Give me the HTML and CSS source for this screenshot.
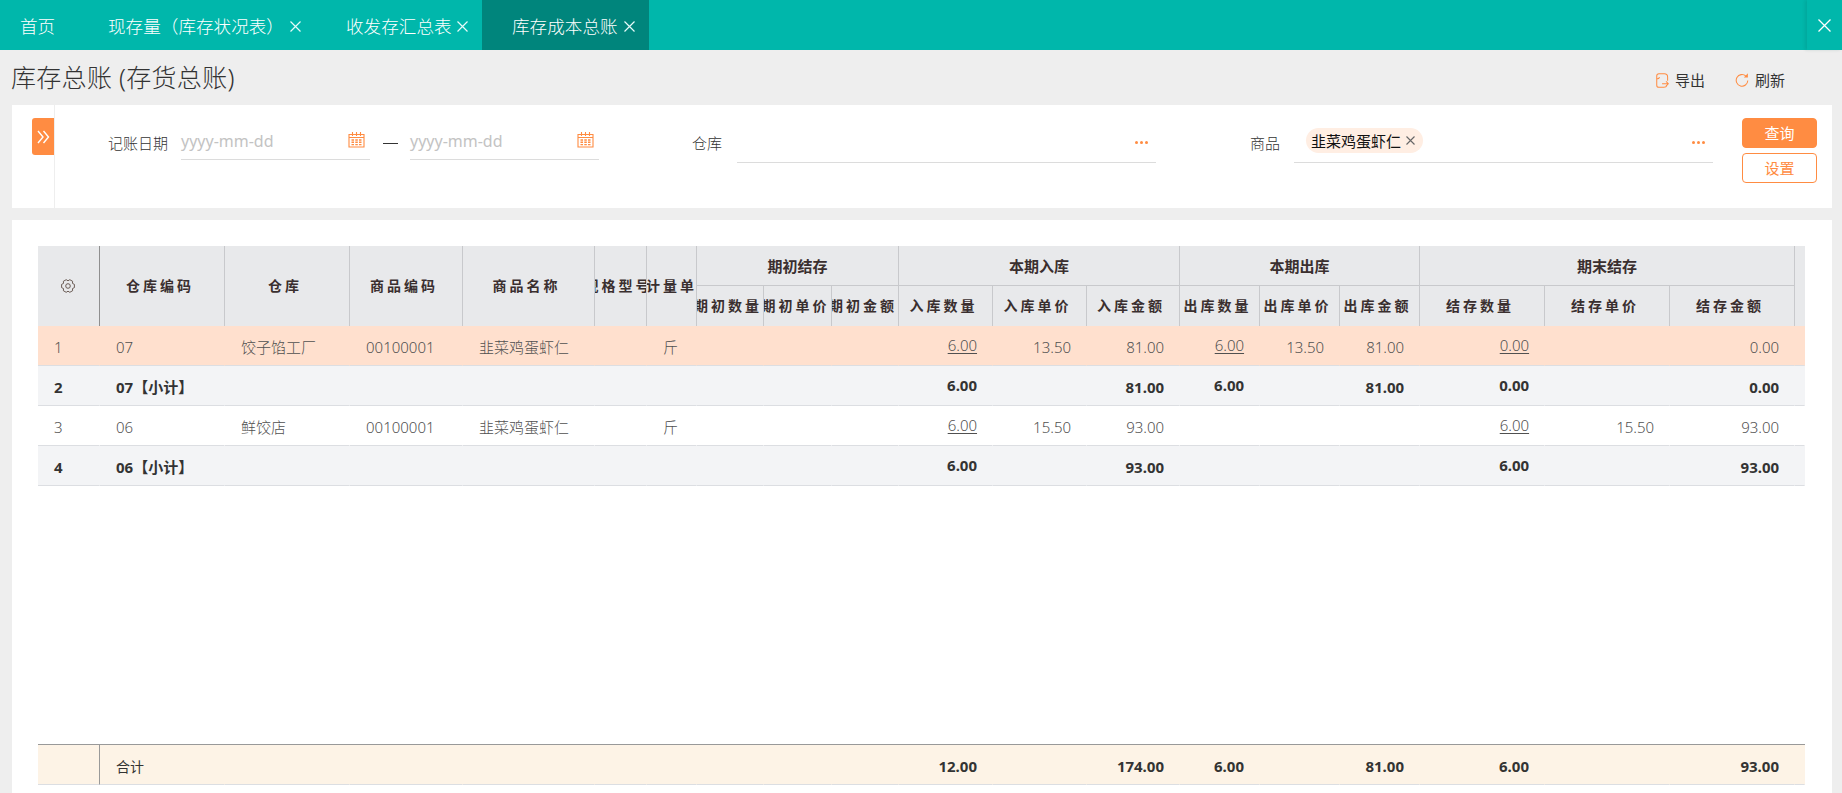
FILE: index.html
```html
<!DOCTYPE html>
<html lang="zh-CN">
<head>
<meta charset="utf-8">
<title>库存总账</title>
<link rel="stylesheet" href="styles.css">
</head>
<body>
<nav class="tabbar">
  <div class="tab tab-home">首页</div>
  <div class="tab tab-a">现存量（库存状况表）<svg class="tab-x" viewBox="0 0 11 11"><path d="M.5.5l10 10M10.500.5l-10 10"/></svg></div>
  <div class="tab tab-b">收发存汇总表<svg class="tab-x" viewBox="0 0 11 11"><path d="M.5.5l10 10M10.500.5l-10 10"/></svg></div>
  <div class="tab tab-c">库存成本总账<svg class="tab-x" viewBox="0 0 11 11"><path d="M.5.5l10 10M10.500.5l-10 10"/></svg></div>
  <div class="tab-fill"></div>
  <div class="tab-close"><svg viewBox="0 0 13 13"><path d="M.5.5l12 12M12.500.5l-12 12"/></svg></div>
</nav>

<header class="titlebar">
  <h1 class="title">库存总账 (存货总账)</h1>
  <div class="tools">
    <span class="tool tool-export"><svg viewBox="0 0 14 16"><path d="M6 .7H3.200C1.800.7.800 1.700.800 3v10c0 1.300 1 2.300 2.400 2.300h5.300c1.500 0 2.700-.6 3-1.800M6 .7h3c2 0 3.500 1.500 3.500 3.500v4M.8 6.300c1.500 0 2.600-.4 3-1.800"/><path d="M6.500 11.500h6.700M10.800 9l2.500 2.500-2.500 2.500"/></svg>导出</span>
    <span class="tool tool-refresh"><svg viewBox="0 0 15 15"><path d="M11.700 3.300A6.200 6.200 0 1 0 13.700 8"/><path class="solid" d="M9.500 4.700h4.300V.4z"/></svg>刷新</span>
  </div>
</header>

<section class="filters">
  <div class="toggle-col"><button class="toggle"><svg viewBox="0 0 13 14"><path d="M1 1l5 6-5 6M6.500 1l5 6-5 6"/></svg></button></div>
  <div class="field field-date">
    <label class="label">记账日期</label>
    <div class="input date"><span class="ph">yyyy-mm-dd</span><svg class="cal" viewBox="0 0 17 17"><path d="M1 3.500h15v12.500H1zM1 6.500h15"/><path d="M4.500 1v4M12.500 1v4M8.500 1v4" /><path class="cal-grid" d="M3.500 9h2.500M7.300 9h2.500M11 9h2.500M3.500 11.300h2.500M7.300 11.300h2.500M11 11.300h2.500M3.500 13.600h2.500M7.300 13.600h2.500M11 13.600h2.500"/></svg></div>
    <span class="dash"></span>
    <div class="input date"><span class="ph">yyyy-mm-dd</span><svg class="cal" viewBox="0 0 17 17"><path d="M1 3.500h15v12.500H1zM1 6.500h15"/><path d="M4.500 1v4M12.500 1v4M8.500 1v4" /><path class="cal-grid" d="M3.500 9h2.500M7.300 9h2.500M11 9h2.500M3.500 11.300h2.500M7.300 11.300h2.500M11 11.300h2.500M3.500 13.600h2.500M7.300 13.600h2.500M11 13.600h2.500"/></svg></div>
  </div>
  <div class="field field-wh">
    <label class="label">仓库</label>
    <div class="input pick"><span class="dots"><i></i><i></i><i></i></span></div>
  </div>
  <div class="field field-goods">
    <label class="label">商品</label>
    <div class="input pick"><span class="tag">韭菜鸡蛋虾仁<svg class="tag-x" viewBox="0 0 9 9"><path d="M.5.5l8 8M8.500.5l-8 8"/></svg></span><span class="dots"><i></i><i></i><i></i></span></div>
  </div>
  <div class="actions">
    <button class="btn btn-primary">查询</button>
    <button class="btn btn-ghost">设置</button>
  </div>
</section>

<main class="panel">
  <div class="grid-wrap">
    <table class="grid">
      <colgroup><col class="w62"><col class="w125"><col class="w125"><col class="w113"><col class="w132"><col class="w52"><col class="w50"><col class="w67"><col class="w68"><col class="w67"><col class="w94"><col class="w94"><col class="w93"><col class="w80"><col class="w80"><col class="w80"><col class="w125"><col class="w125"><col class="w125"><col class="w10"></colgroup>
      <thead>
        <tr class="hd1">
          <th rowspan="2" class="th-gear"><svg class="gear" viewBox="0 0 14 14"><path d="M13.400 5.400V8.600L11.500 9.600 11.600 11.750 8.800 13.300 7 12.200 5.200 13.300 2.400 11.750 2.500 9.600 .6 8.600V5.400L2.500 4.400 2.400 2.250 5.200.7 7 1.800 8.800.7 11.600 2.250 11.500 4.400z"/><circle cx="7" cy="7" r="2.300"/></svg></th>
          <th rowspan="2"><div class="hd">仓库编码</div></th>
          <th rowspan="2"><div class="hd">仓库</div></th>
          <th rowspan="2"><div class="hd">商品编码</div></th>
          <th rowspan="2"><div class="hd">商品名称</div></th>
          <th rowspan="2"><div class="hd">规格型号</div></th>
          <th rowspan="2"><div class="hd hd-unit">计量单</div></th>
          <th colspan="3" class="grp">期初结存</th>
          <th colspan="3" class="grp">本期入库</th>
          <th colspan="3" class="grp">本期出库</th>
          <th colspan="3" class="grp">期末结存</th>
          <th rowspan="2" class="th-gut"></th>
        </tr>
        <tr class="hd2">
          <th><div class="hd">期初数量</div></th><th><div class="hd">期初单价</div></th><th><div class="hd">期初金额</div></th>
          <th><div class="hd">入库数量</div></th><th><div class="hd">入库单价</div></th><th><div class="hd">入库金额</div></th>
          <th><div class="hd">出库数量</div></th><th><div class="hd">出库单价</div></th><th><div class="hd">出库金额</div></th>
          <th><div class="hd">结存数量</div></th><th><div class="hd">结存单价</div></th><th><div class="hd">结存金额</div></th>
        </tr>
      </thead>
      <tbody>
        <tr class="row-sel">
          <td>1</td><td>07</td><td>饺子馅工厂</td><td>00100001</td><td>韭菜鸡蛋虾仁</td><td></td><td>斤</td>
          <td></td><td></td><td></td>
          <td class="num qty"><a class="lnk">6.00</a></td><td class="num">13.50</td><td class="num">81.00</td>
          <td class="num qty"><a class="lnk">6.00</a></td><td class="num">13.50</td><td class="num">81.00</td>
          <td class="num qty"><a class="lnk">0.00</a></td><td class="num"></td><td class="num">0.00</td><td></td>
        </tr>
        <tr class="row-sum">
          <td>2</td><td>07【小计】</td><td></td><td></td><td></td><td></td><td></td>
          <td></td><td></td><td></td>
          <td class="num qty">6.00</td><td class="num"></td><td class="num">81.00</td>
          <td class="num qty">6.00</td><td class="num"></td><td class="num">81.00</td>
          <td class="num qty">0.00</td><td class="num"></td><td class="num">0.00</td><td></td>
        </tr>
        <tr>
          <td>3</td><td>06</td><td>鲜饺店</td><td>00100001</td><td>韭菜鸡蛋虾仁</td><td></td><td>斤</td>
          <td></td><td></td><td></td>
          <td class="num qty"><a class="lnk">6.00</a></td><td class="num">15.50</td><td class="num">93.00</td>
          <td class="num"></td><td class="num"></td><td class="num"></td>
          <td class="num qty"><a class="lnk">6.00</a></td><td class="num">15.50</td><td class="num">93.00</td><td></td>
        </tr>
        <tr class="row-sum">
          <td>4</td><td>06【小计】</td><td></td><td></td><td></td><td></td><td></td>
          <td></td><td></td><td></td>
          <td class="num qty">6.00</td><td class="num"></td><td class="num">93.00</td>
          <td class="num"></td><td class="num"></td><td class="num"></td>
          <td class="num qty">6.00</td><td class="num"></td><td class="num">93.00</td><td></td>
        </tr>
      </tbody>
    </table>
  </div>
  <table class="grid grid-foot">
    <colgroup><col class="w62"><col class="w125"><col class="w125"><col class="w113"><col class="w132"><col class="w52"><col class="w50"><col class="w67"><col class="w68"><col class="w67"><col class="w94"><col class="w94"><col class="w93"><col class="w80"><col class="w80"><col class="w80"><col class="w125"><col class="w125"><col class="w125"><col class="w10"></colgroup>
    <tbody>
      <tr>
        <td class="foot-first"></td><td class="foot-label">合计</td><td></td><td></td><td></td><td></td><td></td>
        <td></td><td></td><td></td>
        <td class="num">12.00</td><td class="num"></td><td class="num">174.00</td>
        <td class="num">6.00</td><td class="num"></td><td class="num">81.00</td>
        <td class="num">6.00</td><td class="num"></td><td class="num">93.00</td><td></td>
      </tr>
    </tbody>
  </table>
</main>
</body>
</html>
```

FILE: styles.css
```css
* { box-sizing: border-box; }
html, body { height: 100%; }
body {
  margin: 0;
  height: 793px;
  overflow: hidden;
  display: flex;
  flex-direction: column;
  background: #eeeeee;
  color: #333;
  font-family: "Noto Sans", "Noto Sans CJK SC", "Open Sans", sans-serif;
  font-size: 15px;
}

/* tab bar */
.tabbar { display: flex; height: 50px; flex: none; background: #00b7ab; color: #fff; }
.tab { display: flex; align-items: center; height: 50px; font-size: 17.6px; white-space: nowrap; font-weight: 300; }
.tab-home { width: 88px; padding-left: 20px; }
.tab-a { width: 242px; padding-left: 20px; justify-content: space-between; padding-right: 29px; }
.tab-b { width: 152px; padding-left: 16px; justify-content: space-between; padding-right: 14px; }
.tab-c { width: 167px; padding-left: 30px; justify-content: space-between; padding-right: 14px; background: #00857c; }
.tab-x { width: 11px; height: 11px; flex: none; fill: none; stroke: #e6fbf9; stroke-width: 1.2; margin-top: 3px; }
.tab-fill { flex: 1; }
.tab-close { width: 35px; display: flex; align-items: center; justify-content: center; box-shadow: -2px 0 3px rgba(0, 80, 75, .15); }
.tab-close svg { width: 13px; height: 13px; fill: none; stroke: #fff; stroke-width: 1.3; }

/* title */
.titlebar { height: 55px; flex: none; display: flex; justify-content: space-between; align-items: flex-start; padding: 0 57px 0 11px; }
.title { margin: 11px 0 0; font-size: 25px; line-height: 32px; font-weight: 300; letter-spacing: .3px; color: #333; white-space: nowrap; }
.tools { display: flex; margin-top: 20px; gap: 30px; }
.tool { display: flex; align-items: center; gap: 6px; font-size: 15px; line-height: 20px; color: #333; }
.tool svg { fill: none; stroke: #ff8c42; stroke-width: 1.1; }
.tool-export svg { width: 13px; height: 15px; }
.tool-refresh svg { width: 14px; height: 14px; }
.tool svg .solid { fill: #ff8c42; stroke: none; }

/* filters */
.filters { height: 103px; flex: none; margin: 0 10px 0 12px; background: #fff; display: flex; }
.toggle-col { width: 43px; flex: none; border-right: 1px solid #eeeeee; padding: 13px 0 0 20px; }
.toggle { display: flex; align-items: center; justify-content: center; width: 22px; height: 37px; padding: 0; border: 0; border-radius: 3px 0 0 3px; background: #ff8c42; }
.toggle svg { width: 13px; height: 14px; fill: none; stroke: #fff; stroke-width: 1.4; }
.field { display: flex; align-items: flex-start; flex: none; }
.label { font-size: 15px; line-height: 20px; color: #333; white-space: nowrap; margin-top: 28px; font-weight: 300; }
.field-date { width: 615px; padding-left: 53px; }
.field-date .label { width: 73px; }
.input { position: relative; border-bottom: 1px solid #dcdcdc; }
.date { width: 189px; height: 55px; padding-top: 24px; }
.ph { font-size: 16px; line-height: 24px; color: #c3c3c3; }
.cal { position: absolute; right: 5px; top: 26px; width: 17px; height: 17px; fill: none; stroke: #ff8c42; stroke-width: 1.1; }
.cal-grid { stroke-width: 1.4; }
.dash { width: 15px; height: 1px; background: #333; margin: 38px 12px 0 13px; flex: none; }
.field-wh { width: 560px; padding-left: 22px; }
.field-wh .label { width: 45px; }
.pick { height: 58px; width: 419px; }
.dots { position: absolute; right: 8px; top: 36px; display: flex; gap: 2px; }
.dots i { width: 3px; height: 3px; border-radius: 50%; background: #ff8c42; }
.field-goods { width: 490px; padding-left: 20px; }
.field-goods .label { width: 44px; }
.tag { position: absolute; left: 12px; top: 23px; height: 25px; width: 117px; padding-left: 5px; display: flex; align-items: center; border-radius: 13px; background: #ffeee3; color: #111; font-size: 15px; white-space: nowrap; }
.tag-x { width: 9px; height: 9px; margin-left: 5px; fill: none; stroke: #666; stroke-width: 1.1; flex: none; }
.actions { display: flex; flex-direction: column; gap: 5px; padding-top: 13px; margin-left: 22px; }
.btn { width: 75px; height: 30px; padding: 0; border-radius: 4px; font: inherit; font-size: 15px; line-height: 20px; }
.btn-primary { background: #ff8c42; border: 1px solid #ff8c42; color: #fff; }
.btn-ghost { background: #fff; border: 1px solid #ff8c42; color: #ff8c42; }

/* table panel */
.panel { flex: 1; margin: 12px 10px 0 12px; padding: 26px 27px 8px 26px; background: #fff; display: flex; flex-direction: column; min-height: 0; }
.grid-wrap { flex: 1; min-height: 0; overflow: hidden; }
.grid { table-layout: fixed; border-collapse: separate; border-spacing: 0; width: 1767px; }
.w10 { width: 10px; } .w50 { width: 50px; } .w52 { width: 52px; } .w62 { width: 62px; }
.w67 { width: 67px; } .w68 { width: 68px; } .w80 { width: 80px; } .w93 { width: 93px; }
.w94 { width: 94px; } .w113 { width: 113px; } .w125 { width: 125px; } .w132 { width: 132px; }

.grid th { background: #e8e9eb; border-right: 1px solid #c8c9cc; padding: 0; color: #3a2f2f; font-weight: 700; font-size: 14px; overflow: hidden; }
.hd1 th { height: 40px; }
.hd2 th { height: 40px; }
.grid .grp { border-bottom: 1px solid #c8c9cc; font-size: 15px; font-weight: 600; padding-bottom: 1px; }
.hd { display: flex; justify-content: center; white-space: nowrap; overflow: hidden; letter-spacing: 3px; padding-right: 4px; line-height: 20px; }
.hd-unit { padding-right: 0; }
.grid .th-gear { border-right-color: #8f8f8f; }
.grid .th-gut { border-right: 0; }
.gear { width: 14px; height: 14px; fill: none; stroke: #5c4c44; stroke-width: .9; stroke-linejoin: round; display: block; margin: 0 0 0 23px; }

.grid td { height: 40px; padding: 2px 0 0 16px; background: #fff; border-right: 1px solid transparent; border-bottom: 1px solid #dcdee2; font-size: 15px; color: #505050; white-space: nowrap; overflow: hidden; font-weight: 300; }
.grid td.num { padding: 2px 15px 0 0; text-align: right; }
.grid td.qty { padding: 0 15px 2px 0; }
.lnk { color: #505050; text-decoration: underline; text-underline-offset: 2px; }
.row-sel td { background: #ffe0ce; }
.grid .row-sum td { background: #f3f4f6; color: #333; font-weight: 700; }

.grid-foot { flex: none; border-top: 1px solid #999; }
.grid-foot td { background: #fdf3e6; color: #333; }
.grid .foot-first { border-right: 1px solid #999; }
.grid .foot-label { padding-left: 16px; font-size: 14px; font-weight: 400; }
.grid-foot td.num { font-weight: 700; }
```
